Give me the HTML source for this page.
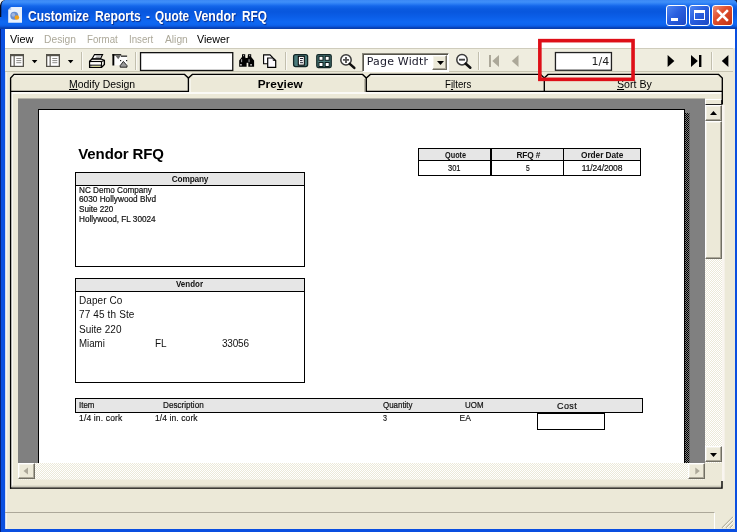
<!DOCTYPE html>
<html>
<head>
<meta charset="utf-8">
<title>Customize Reports - Quote Vendor RFQ</title>
<style>
html,body{margin:0;padding:0;}
body{width:737px;height:532px;overflow:hidden;background:#0831d9;font-family:"Liberation Sans",sans-serif;position:relative;}
.a{position:absolute;}
.t{position:absolute;white-space:nowrap;line-height:1;will-change:opacity;}
#win{left:0;top:0;width:737px;height:532px;background:#0a4fe0;}
#title{left:0;top:0;width:737px;height:29px;background:linear-gradient(to bottom,#3a88f5 0,#3f8ff9 2px,#2a7cf4 4px,#1467ea 6px,#0a5ae0 9px,#0857de 12px,#0b5ee8 17px,#0f68f2 22px,#0d64ee 25px,#0a55da 26.500px,#083fae 28px,#083fae 29px);}
#ttext{left:27px;top:8px;color:#fff;font-weight:bold;font-size:13.5px;letter-spacing:0.35px;text-shadow:1px 1px 1px #0a2a86;}
.cb{top:5px;width:21px;height:21px;border-radius:3px;box-sizing:border-box;border:1px solid #fff;}
.cbb{background:linear-gradient(135deg,#4f86f2 0,#2a5fdf 45%,#1c48c4 100%);}
#close{background:linear-gradient(135deg,#ee9078 0,#e0502e 40%,#c03012 100%);}
#client{left:5px;top:29px;width:730px;height:500px;background:#ece9d8;}
#menu{left:5px;top:29px;width:730px;height:19px;background:#fff;}
.m{top:33px;font-size:12px;color:#000;}
.g{color:#aca899;}
#tb{left:5px;top:48px;width:728px;height:24px;background:#efeddf;border-top:1px solid #cfccbc;border-bottom:1px solid #c8c5b2;box-sizing:border-box;}
.sep{top:52px;width:1px;height:18px;background:#c2bfae;border-right:1px solid #faf9f4;}
.tabt{top:78px;font-size:12px;color:#000;}
u{text-decoration:underline;}
.pg{position:absolute;white-space:nowrap;line-height:1;color:#111;font-family:"Liberation Sans",sans-serif;}
.s8{font-size:8px;letter-spacing:0.25px;}
.s11{font-size:10.5px;letter-spacing:0.3px;}
.b{font-weight:bold;}
.sbtn{background:#ece9d8;box-sizing:border-box;border:1px solid;border-color:#fff #716f64 #716f64 #fff;box-shadow:inset -1px -1px 0 #aca899,inset 1px 1px 0 #f4f2e8;}
</style>
</head>
<body>
<div id="win" class="a"></div>
<div class="a" style="left:0;top:0;width:1px;height:532px;background:#05207a;"></div>
<div id="title" class="a"></div>
<!-- rounded corners -->
<svg class="a" style="left:0;top:0" width="6" height="18"><path d="M0 0H5C2.500 0.500 1.500 2.500 1.300 6V17H0Z" fill="#05081c"/><path d="M0 0H4.500C2 0.500 0.500 2.500 0 5.500Z" fill="#f4f4f4"/></svg>
<svg class="a" style="left:731px;top:0" width="6" height="6"><path d="M6 0H3C4.800 0.500 5.600 1.500 6 3.500Z" fill="#10193a"/></svg>
<!-- app icon -->
<svg class="a" style="left:8px;top:6px" width="16" height="18" viewBox="8 6 16 18">
  <path d="M11.200 7H22V22.800H8.200V10Z" fill="#e9f1fd"/>
  <path d="M8.200 10L11.200 7V10Z" fill="#b9cdf0"/>
  <circle cx="14.300" cy="15.700" r="4" fill="#6a8fcf"/>
  <circle cx="13.300" cy="14.800" r="1.900" fill="#9fb6e2"/>
  <circle cx="16.900" cy="17.500" r="2.300" fill="#f2a21c"/>
</svg>
<!-- caption buttons -->
<div class="a cb cbb" style="left:666px;"></div>
<div class="a" style="left:671px;top:18px;width:7px;height:3px;background:#fff;"></div>
<div class="a cb cbb" style="left:689px;"></div>
<div class="a" style="left:694px;top:10px;width:11px;height:10px;box-sizing:border-box;border:1px solid #fff;border-top-width:3px;"></div>
<div id="close" class="a cb" style="left:712px;"></div>
<svg class="a" style="left:712px;top:5px" width="21" height="21"><path d="M6 6L15 15M15 6L6 15" stroke="#fff" stroke-width="2.500" stroke-linecap="square"/></svg>

<div id="client" class="a"></div>
<div id="menu" class="a"></div>
<div class="a" style="left:5px;top:48px;width:1px;height:481px;background:#cfdaf2;"></div><div class="a" style="left:6px;top:48px;width:1px;height:481px;background:#f5f3ec;"></div>

<!-- toolbar -->
<div id="tb" class="a"></div>
<!-- toolbar icons drawn in one svg (coords = page coords) -->
<svg class="a" style="left:0;top:48px" width="737" height="26" viewBox="0 48 737 26">
 <g transform="translate(10 54)"><rect x="0" y="0" width="14" height="13" fill="#55534b"/><rect x="1.300" y="2.200" width="11.400" height="9.600" fill="#fff"/><rect x="3.600" y="2" width="1.100" height="10" fill="#55534b"/><path d="M6.300 4.500H11.300M6.300 6.600H11.300M6.300 8.700H11.300" stroke="#8d8c88" stroke-width="1"/></g><g transform="translate(31.8 59.9)"><path d="M0 0H5.600L2.800 3.300Z" fill="#000"/></g>
 <g transform="translate(46 54)"><rect x="0" y="0" width="14" height="13" fill="#55534b"/><rect x="1.300" y="2.200" width="11.400" height="9.600" fill="#fff"/><rect x="3.600" y="2" width="1.100" height="10" fill="#55534b"/><path d="M6.300 4.500H11.300M6.300 6.600H11.300M6.300 8.700H11.300" stroke="#8d8c88" stroke-width="1"/></g><g transform="translate(67.8 59.9)"><path d="M0 0H5.600L2.800 3.300Z" fill="#000"/></g>
 <!-- printer -->
 <path d="M92 59L94.500 54.600H102.600L100.400 59Z" fill="#fff" stroke="#000" stroke-width="1.100"/>
 <path d="M96.300 56.100H100.600M95.500 57.500H99.800" stroke="#555" stroke-width="0.600"/>
 <path d="M89.600 61.300L92 59H101L104.400 60.400V64.600L101.400 67.400H89.600Z" fill="#ecebe4" stroke="#000" stroke-width="1.300" stroke-linejoin="round"/>
 <path d="M89.600 61.500H101.400L104.400 60.400M101.400 61.500V67.400" fill="none" stroke="#000" stroke-width="1.100"/>
 <rect x="90.500" y="62.800" width="10.300" height="1.700" fill="#fff"/>
 <path d="M89.600 65.200H101.400" stroke="#000" stroke-width="1"/>
 <rect x="92" y="65.900" width="8" height="0.900" fill="#d8d88a"/>
 <!-- page setup -->
 <rect x="113.500" y="56" width="13.500" height="9.300" fill="#fdfdfd"/>
 <rect x="112.400" y="54.200" width="1.900" height="11.300" fill="#000"/>
 <rect x="112.400" y="54.200" width="8.800" height="1.300" fill="#000"/>
 <rect x="121" y="55.600" width="6.100" height="1.100" fill="#000"/>
 <path d="M115.300 55.400H121L118.200 59.200Z" fill="#6a6a6a"/>
 <path d="M120.200 67.200V65.600L123.400 61.400L127 65.600V67.200Z" fill="#9a9a9a" stroke="#1a1a1a" stroke-width="0.900"/>
 <rect x="120" y="60" width="1.200" height="1.200" fill="#222"/><rect x="126" y="60" width="1.200" height="1.200" fill="#222"/>
 <!-- binoculars -->
 <path d="M242 54.200H245.200V57L246.600 60.500V66.800H239.200V60.500L242 57Z" fill="#000"/>
 <path d="M248 54.200H251.200V57L254.100 60.500V66.800H248.300V62.500H246V58H247.600Z" fill="#000"/>
 <rect x="245" y="58.200" width="4" height="4.400" fill="#000"/>
 <rect x="243.100" y="55.200" width="1" height="1" fill="#ddd"/><rect x="249.200" y="55.200" width="1" height="1" fill="#ddd"/>
 <rect x="241.200" y="59.200" width="0.900" height="3" fill="#bbb"/><rect x="248.600" y="59.200" width="0.900" height="3" fill="#bbb"/>
 <rect x="240.300" y="64" width="1.300" height="1.600" fill="#eee"/><rect x="250.400" y="64" width="1.300" height="1.600" fill="#eee"/>
 <!-- copy -->
 <path d="M263.600 54.900H270L272.400 57.300V63.800H263.600Z" fill="#fff" stroke="#000" stroke-width="1.100"/>
 <path d="M267.700 58H273.200L275.700 60.500V67.300H267.700Z" fill="#fdfbff" stroke="#000" stroke-width="1.200"/>
 <path d="M273.200 58V60.500H275.700" fill="none" stroke="#000" stroke-width="0.800"/>
 <!-- single page -->
 <rect x="293.600" y="54.600" width="14" height="12" rx="2" fill="#4b7b7b" stroke="#122626" stroke-width="1.300"/>
 <rect x="298.300" y="56.300" width="6" height="8.800" fill="#fff" stroke="#000" stroke-width="1"/>
 <path d="M300 58.500H303M300 60.600H302.500M300 62.700H303" stroke="#223" stroke-width="1"/>
 <!-- multi page -->
 <rect x="316.800" y="54.600" width="14.400" height="13" rx="1.500" fill="#4b7b7b" stroke="#122626" stroke-width="1.300"/>
 <g fill="#fff" stroke="#0a1a1a" stroke-width="1"><rect x="319" y="56.300" width="4" height="4"/><rect x="325.200" y="56.300" width="4" height="4"/><rect x="319" y="62.500" width="4" height="4"/><rect x="325.200" y="62.500" width="4" height="4"/></g>
 <!-- zoom in / out -->
 <g transform="translate(346 59.9)"><circle cx="0" cy="0" r="5.200" fill="#fdfdfd" stroke="#3a3a3a" stroke-width="1.500"/><path d="M3.800 4L8.300 8" stroke="#111" stroke-width="2.600" stroke-linecap="round"/></g><path d="M343 59.900H349M346 56.900V62.900" stroke="#555" stroke-width="1.900"/>
 <g transform="translate(462 59.7)"><circle cx="0" cy="0" r="5.200" fill="#fdfdfd" stroke="#3a3a3a" stroke-width="1.500"/><path d="M3.800 4L8.300 8" stroke="#111" stroke-width="2.600" stroke-linecap="round"/></g><path d="M459 59.700H465" stroke="#444" stroke-width="1.900"/>
 <!-- first / prev (disabled) -->
 <rect x="489" y="55" width="2" height="12" fill="#aca899"/><path d="M499 55V67L492.300 61Z" fill="#aca899"/>
 <path d="M518.500 55V67L511.800 61Z" fill="#aca899"/>
 <!-- next / last / prev -->
 <path d="M667.600 55V67L674.400 61Z" fill="#000"/>
 <path d="M691 55V67L697.800 61Z" fill="#000"/><rect x="699" y="55" width="2.400" height="12" fill="#000"/>
 <path d="M728.400 55V67L721.800 61Z" fill="#000"/>
</svg>
<div class="a sep" style="left:81px;"></div>
<div class="a sep" style="left:135px;"></div>
<svg class="a" style="left:139px;top:51px" width="96" height="21"><rect x="1.550" y="1.650" width="92.200" height="17.800" fill="#fff" stroke="#111" stroke-width="1.300"/></svg>
<div class="a sep" style="left:285px;"></div>
<!-- combo -->
<div class="a" style="left:362px;top:53px;width:87px;height:19px;box-sizing:border-box;border:1px solid;border-color:#8a887c #fff #fff #8a887c;background:#fff;box-shadow:inset 1px 1px 0 #55534a;"></div>
<div class="a sbtn" style="left:432px;top:55px;width:15px;height:15px;"></div>
<svg class="a" style="left:437px;top:61px" width="7" height="4"><path d="M0 0H7L3.500 4Z" fill="#000"/></svg>
<div class="a sep" style="left:478px;"></div>
<!-- page box -->
<svg class="a" style="left:554px;top:51px" width="60" height="21"><rect x="1.450" y="1.550" width="56" height="17.700" fill="#fff" stroke="#222" stroke-width="1.300"/></svg>
<div class="a sep" style="left:711px;"></div>

<!-- tabs + panel border -->
<svg class="a" style="left:0;top:72px" width="737" height="420" viewBox="0 72 737 420">
 <defs>
  <pattern id="chk" width="2" height="2" patternUnits="userSpaceOnUse"><rect width="2" height="2" fill="#ece9d8"/><rect width="1" height="1" fill="#fff"/><rect x="1" y="1" width="1" height="1" fill="#fff"/></pattern>
  <pattern id="shd" width="2" height="2" patternUnits="userSpaceOnUse"><rect width="2" height="2" fill="#808080"/><rect width="1" height="1" fill="#000"/><rect x="1" y="1" width="1" height="1" fill="#000"/></pattern>
 </defs>
 <rect x="11" y="92" width="711" height="2" fill="#fbfaf6"/>
 <rect x="11.200" y="92" width="1.600" height="395" fill="#fbfaf6"/>
 <rect x="12" y="485.600" width="710" height="1.400" fill="#cdcabb"/>
 <rect x="722" y="105" width="2.600" height="376" fill="#f9f5f0"/>
 <path d="M13 76H184M193 76H362M371 76H540M549 76H717" stroke="#f8f7f1" stroke-width="1.200" fill="none"/>
 <path d="M190 79V92" stroke="#fbfaf6" stroke-width="1.300"/>
 <path d="M364.900 79V92" stroke="#a5a292" stroke-width="1.200"/>
 <!-- preview gray -->
 <rect x="18" y="98" width="687" height="1" fill="#b4b2a8"/>
 <rect x="18" y="99" width="687" height="364" fill="#808080"/>
 <rect x="38" y="109" width="647" height="354" fill="#000"/>
 <rect x="39" y="110" width="645" height="353" fill="#fff"/>
 <rect x="685" y="113" width="4.400" height="350" fill="url(#shd)"/>
 <!-- scrollbar tracks -->
 <rect x="705" y="99" width="17" height="364" fill="url(#chk)"/>
 <rect x="18" y="463" width="687" height="16.500" fill="url(#chk)"/>
 <rect x="705" y="463" width="17" height="16.500" fill="#ece9d8"/>
 <!-- outlines -->
 <path d="M10.600 488.800V78L14 74.400H184.600L188.400 78L192.300 74.400H362.600L366.300 78L370.300 74.400H540.500L544.300 78L548 74.400H718.600L722.300 78V104.500" fill="none" stroke="#000" stroke-width="1.350" stroke-linejoin="miter"/>
 <path d="M10 488.100H722M722 481V488.800" fill="none" stroke="#000" stroke-width="1.400"/>
 <path d="M188.400 78V91.300H10.600M366.300 78V91.300H722.300M544.300 78V91.300" fill="none" stroke="#000" stroke-width="1.350"/>
</svg>

<!-- vertical scrollbar -->
<div class="a" style="left:705px;top:99px;width:17px;height:6px;background:#ece9d8;border-top:1px solid #fff;border-left:1px solid #fff;border-bottom:1px solid #222;border-right:1px solid #222;box-sizing:border-box;"></div>
<div class="a sbtn" style="left:705px;top:105px;width:17px;height:16px;"></div>
<svg class="a" style="left:710px;top:111px" width="7" height="4"><path d="M0 4H7L3.500 0Z" fill="#000"/></svg>
<div class="a sbtn" style="left:705px;top:121px;width:17px;height:138px;"></div>
<div class="a sbtn" style="left:705px;top:446px;width:17px;height:16px;"></div>
<svg class="a" style="left:710px;top:453px" width="7" height="4"><path d="M0 0H7L3.500 4Z" fill="#000"/></svg>
<!-- horizontal scrollbar -->
<div class="a sbtn" style="left:18px;top:463px;width:17px;height:16px;"></div>
<svg class="a" style="left:23px;top:467px" width="6" height="8"><path d="M5 0.500V7.500L0.500 4Z" fill="#aca899"/></svg>
<div class="a sbtn" style="left:688px;top:463px;width:17px;height:16px;"></div>
<svg class="a" style="left:695px;top:467px" width="6" height="8"><path d="M0.300 0.500V7.500L4.800 4Z" fill="#aca899"/></svg>

<!-- page content -->

<div class="a" style="left:75px;top:172px;width:230px;height:95px;box-sizing:border-box;border:1px solid #000;background:#fff;"></div>
<div class="a" style="left:76px;top:173px;width:228px;height:12px;background:#e6e6e6;border-bottom:1px solid #000;"></div>

<div class="a" style="left:75px;top:278px;width:230px;height:105px;box-sizing:border-box;border:1px solid #000;background:#fff;"></div>
<div class="a" style="left:76px;top:279px;width:228px;height:12px;background:#e6e6e6;border-bottom:1px solid #000;"></div>

<!-- quote table -->
<div class="a" style="left:418px;top:148px;width:223px;height:28px;box-sizing:border-box;border:1px solid #000;background:#fff;"></div>
<div class="a" style="left:419px;top:149px;width:221px;height:11px;background:#e6e6e6;border-bottom:1px solid #000;"></div>
<div class="a" style="left:490px;top:148px;width:2px;height:28px;background:#000;"></div>
<div class="a" style="left:563px;top:148px;width:1px;height:28px;background:#000;"></div>

<!-- items table -->
<div class="a" style="left:75px;top:398px;width:568px;height:15px;box-sizing:border-box;border:1px solid #000;background:#e6e6e6;"></div>
<div class="a" style="left:537px;top:413px;width:68px;height:17px;box-sizing:border-box;border:1px solid #000;background:#fff;"></div>


<!-- TEXTS -->
<div class="t" style="left:28.00px;top:9.00px;font-size:14.8px;color:#fff;letter-spacing:0.000px;font-weight:bold;transform:scaleX(0.8165);transform-origin:0 0;text-shadow:1px 1px 1px #0a2a86;">Customize</div>
<div class="t" style="left:95.00px;top:9.00px;font-size:14.8px;color:#fff;letter-spacing:0.000px;font-weight:bold;transform:scaleX(0.8190);transform-origin:0 0;text-shadow:1px 1px 1px #0a2a86;">Reports</div>
<div class="t" style="left:146.00px;top:9.00px;font-size:14.8px;color:#fff;letter-spacing:0.000px;font-weight:bold;transform:scaleX(0.7709);transform-origin:0 0;text-shadow:1px 1px 1px #0a2a86;">-</div>
<div class="t" style="left:154.70px;top:9.00px;font-size:14.8px;color:#fff;letter-spacing:0.000px;font-weight:bold;transform:scaleX(0.7999);transform-origin:0 0;text-shadow:1px 1px 1px #0a2a86;">Quote</div>
<div class="t" style="left:194.00px;top:9.00px;font-size:14.8px;color:#fff;letter-spacing:0.000px;font-weight:bold;transform:scaleX(0.8312);transform-origin:0 0;text-shadow:1px 1px 1px #0a2a86;">Vendor</div>
<div class="t" style="left:242.40px;top:9.00px;font-size:14.8px;color:#fff;letter-spacing:0.000px;font-weight:bold;transform:scaleX(0.7970);transform-origin:0 0;text-shadow:1px 1px 1px #0a2a86;">RFQ</div>
<div class="t" style="left:10.00px;top:34.00px;font-size:11.5px;color:#000;letter-spacing:0.000px;transform:scaleX(0.9466);transform-origin:0 0;">View</div>
<div class="t" style="left:44.00px;top:34.00px;font-size:11.5px;color:#aca899;letter-spacing:0.000px;transform:scaleX(0.8939);transform-origin:0 0;">Design</div>
<div class="t" style="left:86.80px;top:34.00px;font-size:11.5px;color:#aca899;letter-spacing:0.000px;transform:scaleX(0.8456);transform-origin:0 0;">Format</div>
<div class="t" style="left:128.70px;top:34.00px;font-size:11.5px;color:#aca899;letter-spacing:0.000px;transform:scaleX(0.8449);transform-origin:0 0;">Insert</div>
<div class="t" style="left:164.50px;top:34.00px;font-size:11.5px;color:#aca899;letter-spacing:0.000px;transform:scaleX(0.8916);transform-origin:0 0;">Align</div>
<div class="t" style="left:197.00px;top:34.00px;font-size:11.5px;color:#000;letter-spacing:0.000px;transform:scaleX(0.9329);transform-origin:0 0;">Viewer</div>
<div class="t" style="left:366.80px;top:56.00px;font-size:11px;color:#1a1a2a;letter-spacing:0.179px;font-family:'DejaVu Sans','Liberation Sans',sans-serif;width:61.2px;overflow:hidden;height:14.3px;">Page Width</div>
<div class="t" style="left:591.60px;top:56.00px;font-size:11px;color:#222;letter-spacing:-0.002px;font-family:'DejaVu Sans','Liberation Sans',sans-serif;">1/4</div>
<div class="t" style="left:68.50px;top:79.00px;font-size:11.8px;color:#000;letter-spacing:0.000px;transform:scaleX(0.8854);transform-origin:0 0;"><u>M</u>odify Design</div>
<div class="t" style="left:257.70px;top:79.00px;font-size:11.8px;color:#000;letter-spacing:0.065px;font-weight:bold;">Pre<u>v</u>iew</div>
<div class="t" style="left:444.70px;top:79.00px;font-size:11.8px;color:#000;letter-spacing:0.000px;transform:scaleX(0.8187);transform-origin:0 0;">F<u>i</u>lters</div>
<div class="t" style="left:616.80px;top:79.00px;font-size:11.8px;color:#000;letter-spacing:0.000px;transform:scaleX(0.8994);transform-origin:0 0;"><u>S</u>ort By</div>
<!-- page -->
<div class="t" style="left:78.30px;top:146.00px;font-size:15px;color:#000;letter-spacing:-0.109px;font-weight:bold;">Vendor RFQ</div>
<div class="t" style="left:171.80px;top:175.00px;font-size:8.3px;color:#111;letter-spacing:-0.186px;font-weight:bold;">Company</div>
<div class="t" style="left:78.60px;top:186.00px;font-size:8.5px;color:#111;letter-spacing:0.000px;transform:scaleX(0.9585);transform-origin:0 0;-webkit-text-stroke:0.2px #111;">NC Demo Company</div>
<div class="t" style="left:78.60px;top:195.00px;font-size:8.5px;color:#111;letter-spacing:0.000px;transform:scaleX(0.9700);transform-origin:0 0;-webkit-text-stroke:0.2px #111;">6030 Hollywood Blvd</div>
<div class="t" style="left:78.60px;top:205.00px;font-size:8.5px;color:#111;letter-spacing:0.000px;transform:scaleX(0.9522);transform-origin:0 0;-webkit-text-stroke:0.2px #111;">Suite 220</div>
<div class="t" style="left:78.60px;top:215.00px;font-size:8.5px;color:#111;letter-spacing:0.000px;transform:scaleX(0.9630);transform-origin:0 0;-webkit-text-stroke:0.2px #111;">Hollywood, FL 30024</div>
<div class="t" style="left:175.70px;top:280.00px;font-size:8.3px;color:#111;letter-spacing:0.000px;font-weight:bold;transform:scaleX(0.9597);transform-origin:0 0;">Vendor</div>
<div class="t" style="left:79.00px;top:296.00px;font-size:10px;color:#111;letter-spacing:0.072px;">Daper Co</div>
<div class="t" style="left:79.00px;top:310.00px;font-size:10px;color:#111;letter-spacing:0.134px;">77 45 th Ste</div>
<div class="t" style="left:79.00px;top:325.00px;font-size:10px;color:#111;letter-spacing:0.030px;">Suite 220</div>
<div class="t" style="left:79.00px;top:339.00px;font-size:10px;color:#111;letter-spacing:0.000px;transform:scaleX(0.9675);transform-origin:0 0;">Miami</div>
<div class="t" style="left:155.00px;top:339.00px;font-size:10px;color:#111;letter-spacing:-0.170px;">FL</div>
<div class="t" style="left:222.00px;top:339.00px;font-size:10px;color:#111;letter-spacing:-0.202px;">33056</div>
<div class="t" style="left:444.90px;top:151.00px;font-size:8.3px;color:#111;letter-spacing:0.000px;font-weight:bold;transform:scaleX(0.8800);transform-origin:0 0;">Quote</div>
<div class="t" style="left:516.50px;top:151.00px;font-size:8.3px;color:#111;letter-spacing:-0.161px;font-weight:bold;">RFQ #</div>
<div class="t" style="left:581.00px;top:151.00px;font-size:8.3px;color:#111;letter-spacing:-0.055px;font-weight:bold;">Order Date</div>
<div class="t" style="left:448.00px;top:164.00px;font-size:8.5px;color:#111;letter-spacing:0.000px;transform:scaleX(0.8814);transform-origin:0 0;-webkit-text-stroke:0.2px #111;">301</div>
<div class="t" style="left:526.30px;top:164.00px;font-size:8.5px;color:#111;letter-spacing:0.000px;transform:scaleX(0.7827);transform-origin:0 0;-webkit-text-stroke:0.2px #111;">5</div>
<div class="t" style="left:581.70px;top:164.00px;font-size:8.5px;color:#111;letter-spacing:-0.135px;-webkit-text-stroke:0.2px #111;">11/24/2008</div>
<div class="t" style="left:79.00px;top:401.00px;font-size:8.5px;color:#111;letter-spacing:0.000px;transform:scaleX(0.9376);transform-origin:0 0;-webkit-text-stroke:0.2px #111;">Item</div>
<div class="t" style="left:163.30px;top:401.00px;font-size:8.5px;color:#111;letter-spacing:0.000px;transform:scaleX(0.9572);transform-origin:0 0;-webkit-text-stroke:0.2px #111;">Description</div>
<div class="t" style="left:383.00px;top:401.00px;font-size:8.5px;color:#111;letter-spacing:0.000px;transform:scaleX(0.9319);transform-origin:0 0;-webkit-text-stroke:0.2px #111;">Quantity</div>
<div class="t" style="left:464.50px;top:401.00px;font-size:8.5px;color:#111;letter-spacing:0.000px;transform:scaleX(0.9329);transform-origin:0 0;-webkit-text-stroke:0.2px #111;">UOM</div>
<div class="t" style="left:557.00px;top:402.00px;font-size:9px;color:#111;letter-spacing:0.398px;-webkit-text-stroke:0.2px #111;">Cost</div>
<div class="t" style="left:79.00px;top:414.00px;font-size:8.5px;color:#111;letter-spacing:0.157px;-webkit-text-stroke:0.15px #111;">1/4 in. cork</div>
<div class="t" style="left:155.00px;top:414.00px;font-size:8.5px;color:#111;letter-spacing:0.093px;-webkit-text-stroke:0.15px #111;">1/4 in. cork</div>
<div class="t" style="left:383.00px;top:414.00px;font-size:8.5px;color:#111;letter-spacing:0.000px;transform:scaleX(0.8461);transform-origin:0 0;-webkit-text-stroke:0.15px #111;">3</div>
<div class="t" style="left:459.40px;top:414.00px;font-size:8.5px;color:#111;letter-spacing:0.260px;-webkit-text-stroke:0.15px #111;">EA</div>

<!-- status bar -->
<div class="a" style="left:5px;top:512px;width:710px;height:17px;box-sizing:border-box;border-top:1px solid #aca899;border-right:1px solid #fff;"></div>
<svg class="a" style="left:721px;top:516px" width="13" height="13"><path d="M12 1L1 12M12 5L5 12M12 9L9 12" stroke="#b8b5a2" stroke-width="1.300"/><path d="M13 1L2 12M13 5L6 12M13 9L10 12" stroke="#fff" stroke-width="0.800"/></svg>

<!-- red highlight box -->
<svg class="a" style="left:536px;top:37px" width="102" height="47"><rect x="3.850" y="3.650" width="93.200" height="38.700" fill="none" stroke="#de0f18" stroke-width="3.600"/></svg>
</body>
</html>
